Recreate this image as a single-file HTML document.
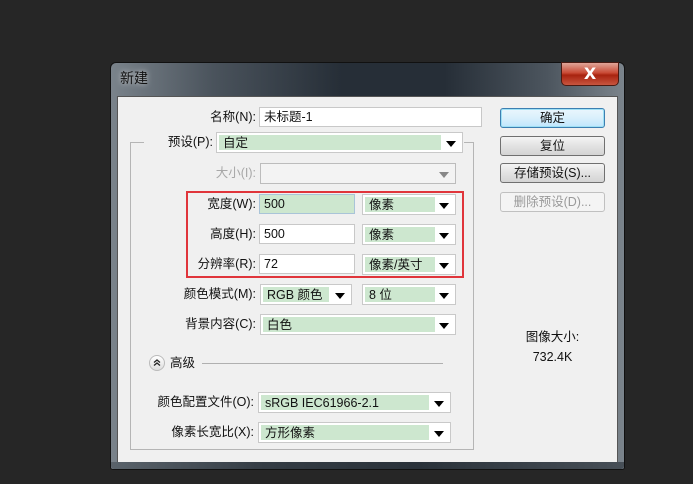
<!DOCTYPE html>
<html><head><meta charset="utf-8"><style>
*{margin:0;padding:0;box-sizing:border-box}
body{width:693px;height:484px;background:#262626;position:relative;overflow:hidden;font-family:"Liberation Sans","Noto Sans CJK SC",sans-serif;font-size:12px;color:#111}
.a{position:absolute}
#win{left:110px;top:62px;width:515px;height:408px;border-radius:6px 6px 3px 3px;background:linear-gradient(90deg,#7a838b 0%,#4a535c 20%,#262e37 45%,#262e37 65%,#4c555e 85%,#7b848c 100%);border:1px solid #111}
#bot{left:111px;top:462px;width:513px;height:7px;background:linear-gradient(90deg,#5a636b,#343c44 30%,#2a323a 60%,#474f57 100%);border-radius:0 0 3px 3px}
#client{left:117px;top:96px;width:501px;height:367px;background:#f0f0f0;border:1px solid #555}
.title{left:120px;top:68px;font-size:14px;color:#111;text-shadow:0 0 6px #ddd}
#close{left:561px;top:62px;width:58px;height:24px;border-radius:0 0 5px 5px;background:linear-gradient(#e0a598,#c94a35 45%,#a8230f 55%,#c8553f);border:1px solid #4a1a12;color:#fff;font-weight:bold;font-size:16px;text-align:center;line-height:22px;font-family:"DejaVu Sans",sans-serif}
.lbl{text-align:right;font-size:12.5px;line-height:20px;height:20px;color:#111}
.in{background:#fff;border:1px solid #c8c8c8;height:20px;line-height:18px;padding-left:4px;font-size:12.5px}
.sel{height:21px;background:#fff;border:1px solid #c9c9c9}
.sel .g{position:absolute;left:2px;top:2px;bottom:2px;background:#cde7cf;line-height:16px;padding-left:4px;font-size:12.5px}
.sel .ar{position:absolute;right:6px;top:8px;width:0;height:0;border-left:5px solid transparent;border-right:5px solid transparent;border-top:6px solid #000}
.btn{left:500px;width:105px;height:20px;border:1px solid #707070;border-radius:3px;background:linear-gradient(#f4f4f4,#e2e2e2 50%,#d4d4d4);text-align:center;line-height:18px;font-size:12.5px}
</style></head><body>
<div class="a" id="win"></div>
<div class="a title">新建</div>
<div class="a" id="close">X</div>
<div class="a" id="client"></div>
<div class="a" id="bot"></div>

<div class="a" style="left:130px;top:142px;width:344px;height:308px;border:1px solid #b5b5b5;border-top:none"></div>
<div class="a" style="left:130px;top:142px;width:14px;border-top:1px solid #b5b5b5"></div>
<div class="a" style="left:464px;top:142px;width:10px;border-top:1px solid #b5b5b5"></div>

<div class="a lbl" style="left:150px;top:107px;width:106px">名称(N):</div>
<div class="a in" style="left:259px;top:107px;width:223px">未标题-1</div>

<div class="a lbl" style="left:150px;top:132px;width:63px">预设(P):</div>
<div class="a sel" style="left:216px;top:132px;width:247px"><div class="g" style="width:222px">自定</div><div class="ar"></div></div>

<div class="a lbl" style="left:150px;top:163px;width:106px;color:#a8a8a8">大小(I):</div>
<div class="a sel" style="left:260px;top:163px;width:196px;background:#f3f3f3;border-color:#bcbcbc"><div class="ar" style="border-top-color:#888"></div></div>

<div class="a" style="left:186px;top:191px;width:278px;height:87px;border:2px solid #e0353b"></div>

<div class="a lbl" style="left:150px;top:194px;width:106px">宽度(W):</div>
<div class="a in" style="left:259px;top:194px;width:96px;background:#cde7cf;border-color:#a9c4d8">500</div>
<div class="a sel" style="left:362px;top:194px;width:94px"><div class="g" style="width:70px">像素</div><div class="ar"></div></div>

<div class="a lbl" style="left:150px;top:224px;width:106px">高度(H):</div>
<div class="a in" style="left:259px;top:224px;width:96px">500</div>
<div class="a sel" style="left:362px;top:224px;width:94px"><div class="g" style="width:70px">像素</div><div class="ar"></div></div>

<div class="a lbl" style="left:150px;top:254px;width:106px">分辨率(R):</div>
<div class="a in" style="left:259px;top:254px;width:96px">72</div>
<div class="a sel" style="left:362px;top:254px;width:94px"><div class="g" style="width:70px">像素/英寸</div><div class="ar"></div></div>

<div class="a lbl" style="left:150px;top:284px;width:106px">颜色模式(M):</div>
<div class="a sel" style="left:260px;top:284px;width:92px"><div class="g" style="width:66px">RGB 颜色</div><div class="ar"></div></div>
<div class="a sel" style="left:362px;top:284px;width:94px"><div class="g" style="width:70px">8 位</div><div class="ar"></div></div>

<div class="a lbl" style="left:150px;top:314px;width:106px">背景内容(C):</div>
<div class="a sel" style="left:260px;top:314px;width:196px"><div class="g" style="width:172px">白色</div><div class="ar"></div></div>

<div class="a" style="left:149px;top:355px;width:16px;height:16px;border-radius:50%;background:linear-gradient(#fff,#ddd);border:1px solid #bbb"><svg width="14" height="14" style="position:absolute;left:0;top:0"><path d="M4 6.5L7 4 10 6.5M4 9.5L7 7 10 9.5" stroke="#222" stroke-width="1.3" fill="none"/></svg></div>
<div class="a lbl" style="left:170px;top:353px;text-align:left">高级</div>
<div class="a" style="left:202px;top:363px;width:241px;border-top:1px solid #b0b0b0"></div>

<div class="a lbl" style="left:130px;top:392px;width:124px">颜色配置文件(O):</div>
<div class="a sel" style="left:258px;top:392px;width:193px"><div class="g" style="width:168px">sRGB IEC61966-2.1</div><div class="ar"></div></div>

<div class="a lbl" style="left:130px;top:422px;width:124px">像素长宽比(X):</div>
<div class="a sel" style="left:258px;top:422px;width:193px"><div class="g" style="width:168px">方形像素</div><div class="ar"></div></div>

<div class="a btn" style="top:108px;border-color:#3c7fb1;box-shadow:0 0 0 1px #9ee0f5 inset;background:linear-gradient(#eaf6fd,#d9f0fc 50%,#bee6fd)">确定</div>
<div class="a btn" style="top:136px">复位</div>
<div class="a btn" style="top:163px">存储预设(S)...</div>
<div class="a btn" style="top:192px;color:#9a9a9a;border-color:#c0c0c0;background:#f4f4f4">删除预设(D)...</div>

<div class="a" style="left:500px;top:326px;width:105px;text-align:center;font-size:12.5px">图像大小:</div>
<div class="a" style="left:500px;top:350px;width:105px;text-align:center;font-size:12.5px">732.4K</div>
</body></html>
